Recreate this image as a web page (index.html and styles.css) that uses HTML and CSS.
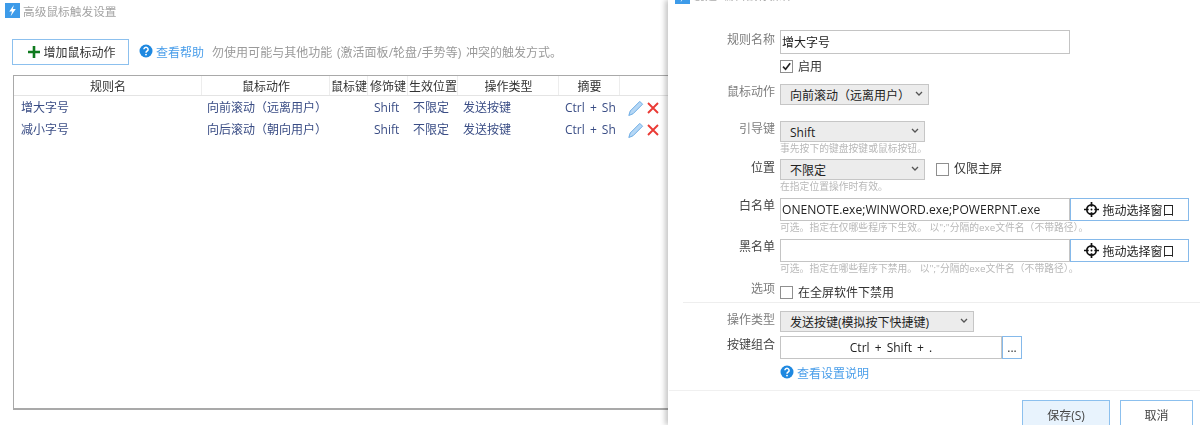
FILE: index.html
```html
<!DOCTYPE html>
<html lang="zh">
<head>
<meta charset="utf-8">
<title>高级鼠标触发设置</title>
<link rel="stylesheet" href="styles.css">
</head>
<body>
<main class="main">
  <section class="left">
    <header class="titlebar">
      <svg class="app-icon" viewBox="0 0 16 16"><rect width="16" height="16" fill="#3d9be9"/><path d="M9.5 2 4.5 9h3L6 14l5.5-7.5H8.300z" fill="#fff"/></svg>
      <span class="title">高级鼠标触发设置</span>
    </header>
    <div class="toolbar">
      <button class="add-btn">
        <svg class="plus" viewBox="0 0 12 12"><path d="M6 0v12M0 6h12" stroke="#0f7a1e" stroke-width="2.600" fill="none"/></svg>
        增加鼠标动作
      </button>
      <svg class="help-icon" viewBox="0 0 14 14"><circle cx="7" cy="7" r="6.500" fill="#1e88e0"/><path d="M4.900 5.300a2.100 2 0 1 1 3.300 1.700c-.8.5-1.200.9-1.200 1.700" fill="none" stroke="#fff" stroke-width="1.500"/><circle cx="7" cy="10.600" r=".95" fill="#fff"/></svg>
      <a class="link">查看帮助</a>
      <span class="tip">勿使用可能与其他功能 (激活面板/轮盘/手势等) 冲突的触发方式。</span>
    </div>
    <div class="table">
      <div class="grid head">
        <div class="th">规则名</div><div class="th">鼠标动作</div><div class="th">鼠标键</div><div class="th">修饰键</div><div class="th">生效位置</div><div class="th">操作类型</div><div class="th">摘要</div><div class="th"></div>
      </div>
      <div class="grid row">
        <div class="td first">增大字号</div><div class="td">向前滚动（远离用户）</div><div class="td"></div><div class="td shift">Shift</div><div class="td">不限定</div><div class="td">发送按键</div><div class="td summary">Ctrl + Shift + .</div>
        <div class="actions">
          <svg class="pencil" viewBox="0 0 16 16"><path d="M.8 15.500 2.200 11 11.800 1.400l2.800 2.800L5 13.800z" fill="#b5d7f5" stroke="#62a6e2" stroke-width=".9"/></svg>
          <svg class="cross" viewBox="0 0 12 12"><path d="M1 1l10 10M11 1 1 11" stroke="#ea3a35" stroke-width="1.900" fill="none"/></svg>
        </div>
      </div>
      <div class="grid row">
        <div class="td first">减小字号</div><div class="td">向后滚动（朝向用户）</div><div class="td"></div><div class="td shift">Shift</div><div class="td">不限定</div><div class="td">发送按键</div><div class="td summary">Ctrl + Shift + ,</div>
        <div class="actions">
          <svg class="pencil" viewBox="0 0 16 16"><path d="M.8 15.500 2.200 11 11.800 1.400l2.800 2.800L5 13.800z" fill="#b5d7f5" stroke="#62a6e2" stroke-width=".9"/></svg>
          <svg class="cross" viewBox="0 0 12 12"><path d="M1 1l10 10M11 1 1 11" stroke="#ea3a35" stroke-width="1.900" fill="none"/></svg>
        </div>
      </div>
    </div>
  </section>

  <section class="dialog">
    <header class="dialog-title">
      <svg class="dialog-icon" viewBox="0 0 16 16"><rect width="16" height="16" fill="#3d9be9"/><path d="M9.500 2 4.500 9h3L6 14l5.500-7.500H8.300z" fill="#fff"/></svg>
      <span class="dialog-caption">创建/编辑鼠标操作</span>
    </header>
    <form class="form">
      <div class="line r1"><label class="lab">规则名称</label><div class="input name">增大字号</div></div>
      <div class="line r2"><span class="lab"></span><span class="check on"><svg viewBox="0 0 12 12"><path d="M2.200 6.200 5 9l5-6.500" fill="none" stroke="#222" stroke-width="1.800"/></svg></span><span class="check-text">启用</span></div>
      <div class="line r3"><label class="lab">鼠标动作</label><div class="select w148">向前滚动（远离用户）<svg class="chev" viewBox="0 0 8 5"><path d="M1 1l3 3 3-3" fill="none" stroke="#555" stroke-width="1.300"/></svg></div></div>
      <div class="line r4"><label class="lab">引导键</label><div class="select w145">Shift<svg class="chev" viewBox="0 0 8 5"><path d="M1 1l3 3 3-3" fill="none" stroke="#555" stroke-width="1.300"/></svg></div></div>
      <div class="line hint"><span class="lab"></span>事先按下的键盘按键或鼠标按钮。</div>
      <div class="line r5"><label class="lab dark">位置</label><div class="select w145">不限定<svg class="chev" viewBox="0 0 8 5"><path d="M1 1l3 3 3-3" fill="none" stroke="#555" stroke-width="1.300"/></svg></div><span class="check gap"></span><span class="check-text">仅限主屏</span></div>
      <div class="line hint"><span class="lab"></span>在指定位置操作时有效。</div>
      <div class="line r6"><label class="lab dark">白名单</label><div class="input list">ONENOTE.exe;WINWORD.exe;POWERPNT.exe</div><button type="button" class="pick"><svg class="target" viewBox="0 0 16 16"><circle cx="8" cy="8" r="5" fill="none" stroke="#111" stroke-width="1.800"/><path d="M8 0v5M8 11v5M0 8h5M11 8h5" stroke="#111" stroke-width="1.800"/><circle cx="8" cy="8" r="1" fill="#111"/></svg>拖动选择窗口</button></div>
      <div class="line hint"><span class="lab"></span>可选。指定在仅哪些程序下生效。 以";"分隔的exe文件名（不带路径）。</div>
      <div class="line r7"><label class="lab dark">黑名单</label><div class="input list"></div><button type="button" class="pick"><svg class="target" viewBox="0 0 16 16"><circle cx="8" cy="8" r="5" fill="none" stroke="#111" stroke-width="1.800"/><path d="M8 0v5M8 11v5M0 8h5M11 8h5" stroke="#111" stroke-width="1.800"/><circle cx="8" cy="8" r="1" fill="#111"/></svg>拖动选择窗口</button></div>
      <div class="line hint"><span class="lab"></span>可选。指定在哪些程序下禁用。 以";"分隔的exe文件名（不带路径）。</div>
      <div class="line r8"><label class="lab">选项</label><span class="check"></span><span class="check-text">在全屏软件下禁用</span></div>
      <hr class="rule one">
      <div class="line r9"><label class="lab">操作类型</label><div class="select w193">发送按键(模拟按下快捷键)<svg class="chev" viewBox="0 0 8 5"><path d="M1 1l3 3 3-3" fill="none" stroke="#555" stroke-width="1.300"/></svg></div></div>
      <div class="line r10"><label class="lab dark">按键组合</label><div class="input keys">Ctrl + Shift + .</div><button type="button" class="more">...</button></div>
      <div class="line r11"><span class="lab"></span><svg class="help-icon2" viewBox="0 0 14 14"><circle cx="7" cy="7" r="6.500" fill="#1e88e0"/><path d="M4.900 5.300a2.100 2 0 1 1 3.300 1.700c-.8.5-1.200.9-1.200 1.700" fill="none" stroke="#fff" stroke-width="1.500"/><circle cx="7" cy="10.600" r=".95" fill="#fff"/></svg><a class="link">查看设置说明</a></div>
    </form>
    <footer class="footer">
      <button class="btn save">保存(S)</button>
      <button class="btn cancel">取消</button>
    </footer>
  </section>
</main>
</body>
</html>
```

FILE: styles.css
```css
* { box-sizing: border-box; }
html, body { margin: 0; padding: 0; height: 425px; overflow: hidden; background: #fff; }
body { font-family: "Open Sans", "Noto Sans CJK SC", sans-serif; font-size: 12px; color: #333; }
.main { display: flex; width: 1200px; height: 425px; overflow: hidden; filter: blur(.3px); }

.left { width: 668px; flex: none; padding: 3px 0 0 5px; overflow: hidden; }
.titlebar { display: flex; align-items: center; height: 15px; color: #a3a3a3; font-size: 11.700px; }
.app-icon { width: 15px; height: 15px; margin-right: 3px; }
.toolbar { display: flex; align-items: center; height: 26px; margin: 21px 0 0 7px; }
.add-btn { display: flex; align-items: center; justify-content: center; width: 117px; height: 26px; padding: 0 0 0 3px; border: 1px solid #8cc0ee; background: #fff; color: #333; font: inherit; }
.plus { width: 12px; height: 12px; margin-right: 3px; }
.help-icon { width: 14px; height: 14px; margin: -3px 3px 0 10px; }
.link { color: #4a9eea; white-space: nowrap; }
.tip { margin-left: 8px; color: #9a9a9a; white-space: nowrap; word-spacing: 1.500px; letter-spacing: .03px; }

.table { width: 670px; height: 335px; margin: 10px 0 0 8px; border: 1px solid #a9a9a9; border-width: 1px 0 2px 1px; border-right: 0; }
.grid { display: grid; grid-template-columns: 188px 128px 38px 40px 50px 101px 61px 1fr; }
.head { height: 20px; border-bottom: 1px solid #e4e4e4; }
.th { padding-top: 1px; padding-left: 1px; text-align: center; line-height: 19px; color: #333; white-space: nowrap; overflow: hidden; border-right: 1px solid #ededed; }
.row { height: 22px; padding-top: 1px; }
.td { padding-left: 5px; line-height: 22px; color: #3a4d85; white-space: nowrap; overflow: hidden; }
.first { padding-left: 7px; }
.shift { padding-left: 6px; }
.summary { padding-left: 6px; word-spacing: 2px; clip-path: inset(0 5px 0 0); }
.actions { display: flex; align-items: center; padding-left: 8px; }
.pencil { width: 16px; height: 16px; }
.cross { width: 12px; height: 12px; margin-left: 3px; }

.dialog { flex: 1; position: relative; background: #fff; box-shadow: -3px 0 5px rgba(0, 0, 0, .22); z-index: 1; padding-left: 1px; overflow: hidden; }
.dialog-title { display: flex; align-items: flex-end; height: 4px; padding-left: 6px; overflow: hidden; color: #aaa; }
.dialog-icon { flex: none; width: 15px; height: 15px; margin-bottom: 0; }
.dialog-caption { margin-left: 3px; line-height: 16px; }

.form { display: block; }
.line { display: flex; align-items: flex-start; }
.lab { flex: none; width: 106px; margin-right: 5px; text-align: right; color: #7d7d7d; line-height: 16px; }
.lab.dark { color: #444; }
.input { border: 1px solid #c4c4c4; background: #fff; color: #222; white-space: nowrap; padding-left: 1px; }
.name { width: 290px; height: 24px; line-height: 23px; font-size: 12px; }
.list { width: 290px; height: 23px; line-height: 21px; font-size: 12.100px; }
.keys { width: 222px; height: 23px; line-height: 21px; text-align: center; padding-left: 0; word-spacing: 2px; }
.select { position: relative; height: 21px; padding-left: 9px; line-height: 21px; background: #ececec; border: 1px solid #c6c6c6; color: #222; white-space: nowrap; }
.w148 { width: 149px; }
.w145 { width: 145px; }
.w193 { width: 194px; }
.chev { position: absolute; right: 5px; top: 6px; width: 8px; height: 5px; }
.check { flex: none; display: flex; width: 13px; height: 13px; border: 1px solid #8f8f8f; background: #fff; }
.check.on svg { width: 11px; height: 11px; }
.check.gap { margin-left: 11px; margin-top: 4px; }
.check-text { margin-left: 5px; color: #333; line-height: 16px; }
.r5 .check-text { line-height: 20px; }
.pick { display: flex; align-items: center; justify-content: center; width: 119px; height: 23px; padding: 0; border: 1px solid #85b9ea; background: #fff; color: #222; font: inherit; }
.target { width: 15px; height: 15px; margin-right: 3px; }
.more { width: 20px; height: 23px; padding: 0; border: 1px solid #85b9ea; background: #fff; color: #333; font: inherit; line-height: 16px; margin-left: 0; }
.hint { font-size: 9.800px; height: 14px; line-height: 14px; color: #b8b8b8; white-space: nowrap; }
.r1 { margin-top: 26px; height: 24px; }
.r1 .lab { margin-top: 2px; }
.r2 { margin-top: 5px; height: 16px; }
.r2 .check { margin-top: 1px; }
.r3 { margin-top: 9px; height: 21px; }
.r4 { margin-top: 16px; height: 21px; }
.r5 { margin-top: 3px; height: 21px; }
.r5 .lab { margin-top: 1px; }
.r6 { margin-top: 4px; height: 23px; }
.r7 { margin-top: 4px; height: 23px; }
.r8 { margin-top: 9px; height: 16px; }
.r8 .lab { margin-top: -4px; }
.r8 .check { margin-top: 1px; }
.rule { margin: 1px 0 0 14px; border: 0; border-top: 1px solid #eee; }
.r9 { margin-top: 8px; height: 21px; }
.r9 .lab { margin-top: 1px; }
.r10 { margin-top: 4px; height: 23px; }
.r10 .lab { margin-top: 1px; }
.r11 { margin-top: 5px; height: 18px; align-items: center; }
.help-icon2 { width: 14px; height: 14px; margin: -3px 3px 0 0; }
.footer { display: flex; justify-content: flex-end; gap: 10px; margin-top: 8px; padding: 9px 7px 0 0; border-top: 1px solid #f0f0f0; }
.btn { height: 40px; padding: 0 0 11px; border: 1px solid #8cc0ee; background: #fff; color: #444; font: inherit; }
.save { width: 88px; background: #e8f3fd; }
.cancel { width: 73px; }
```
